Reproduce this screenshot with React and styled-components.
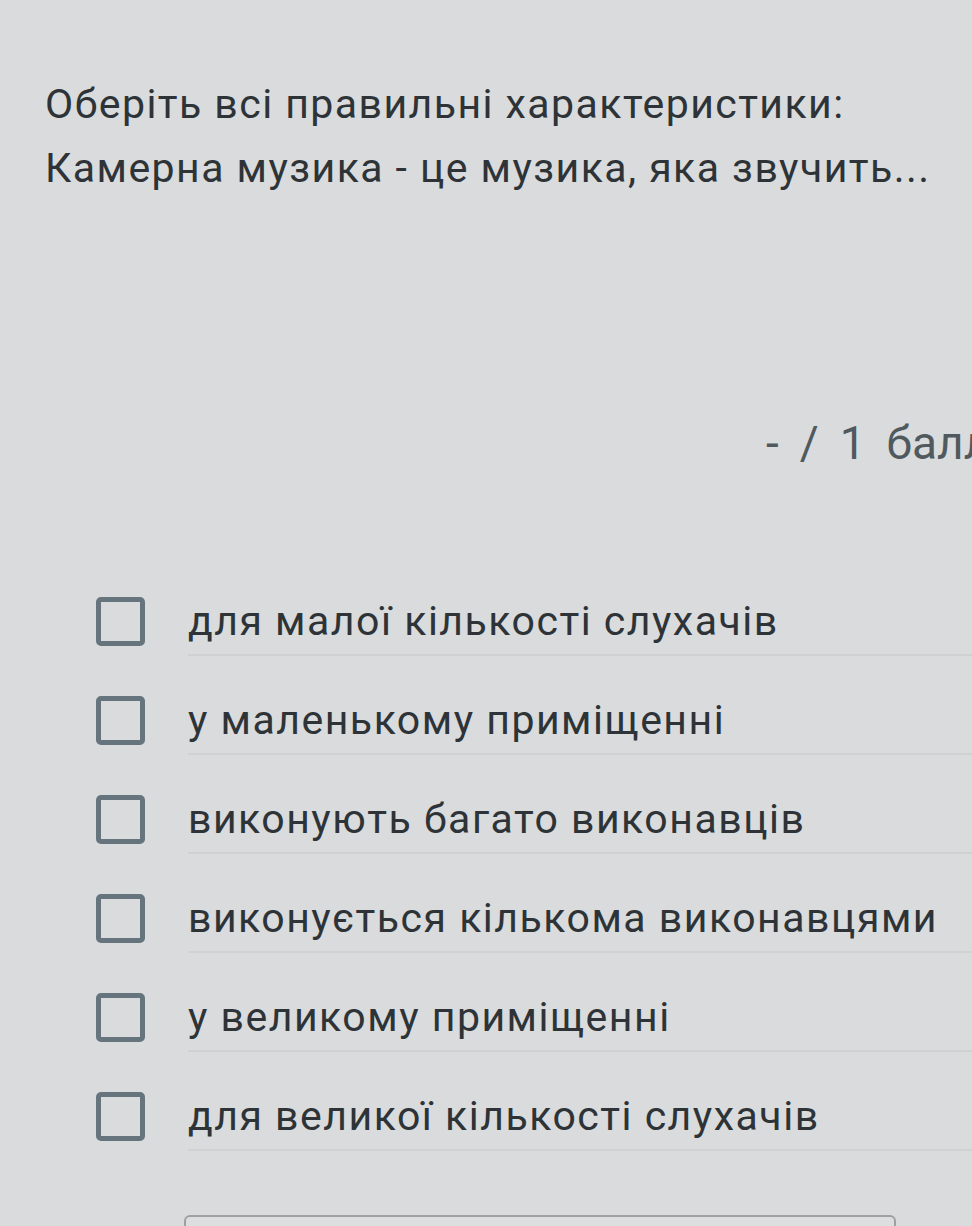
import React from 'react';
import styled, { createGlobalStyle } from 'styled-components';

const GlobalStyle = createGlobalStyle`
  html, body {
    margin: 0;
    padding: 0;
    background: #d9dbdc;
    overflow: hidden;
  }
  body {
    font-family: Roboto, "Noto Sans", "Liberation Sans", sans-serif;
  }
`;

const Page = styled.div`
  width: 972px;
  height: 1226px;
  overflow: hidden;
  background: #d9dbdc;
`;

const Title = styled.div`
  padding: 72px 0 0 45px;
  font-size: 41px;
  line-height: 64px;
  letter-spacing: 1.45px;
  color: #2d3337;
`;

const Points = styled.div`
  margin-top: 213px;
  padding-left: 766px;
  display: flex;
  gap: 21px;
  white-space: nowrap;
  font-size: 46px;
  line-height: 60px;
  color: #4f595e;
`;

const Options = styled.div`
  margin-top: 84px;
  display: flex;
  flex-direction: column;
`;

const Row = styled.label`
  display: flex;
  align-items: flex-start;
  padding: 39px 0 0 96px;
`;

const Box = styled.span`
  box-sizing: border-box;
  flex: none;
  width: 49px;
  height: 49px;
  margin-top: 1px;
  border: 5px solid #66757d;
  border-radius: 5px;
`;

const Text = styled.span`
  flex: 1;
  margin-left: 43px;
  padding-bottom: 8px;
  border-bottom: 2px solid #cfd1d2;
  font-size: 41px;
  line-height: 50px;
  letter-spacing: 1.5px;
  color: #2d3337;
  white-space: nowrap;
`;

const Input = styled.div`
  margin: 64px 0 0 184px;
  width: 712px;
  height: 80px;
  box-sizing: border-box;
  border: 2px solid #9ea0a2;
  border-radius: 6px;
  background: #dcdedf;
`;

const options = [
  'для малої кількості слухачів',
  'у маленькому приміщенні',
  'виконують багато виконавців',
  'виконується кількома виконавцями',
  'у великому приміщенні',
  'для великої кількості слухачів',
];

export default function App() {
  return (
    <Page>
      <GlobalStyle />
      <Title>
        Оберіть всі правильні характеристики:
        <br />
        Камерна музика - це музика, яка звучить...
      </Title>
      <Points>
        <span>-</span>
        <span>/</span>
        <span>1</span>
        <span>балл</span>
      </Points>
      <Options>
        {options.map((o) => (
          <Row key={o}>
            <Box />
            <Text>{o}</Text>
          </Row>
        ))}
      </Options>
      <Input />
    </Page>
  );
}
